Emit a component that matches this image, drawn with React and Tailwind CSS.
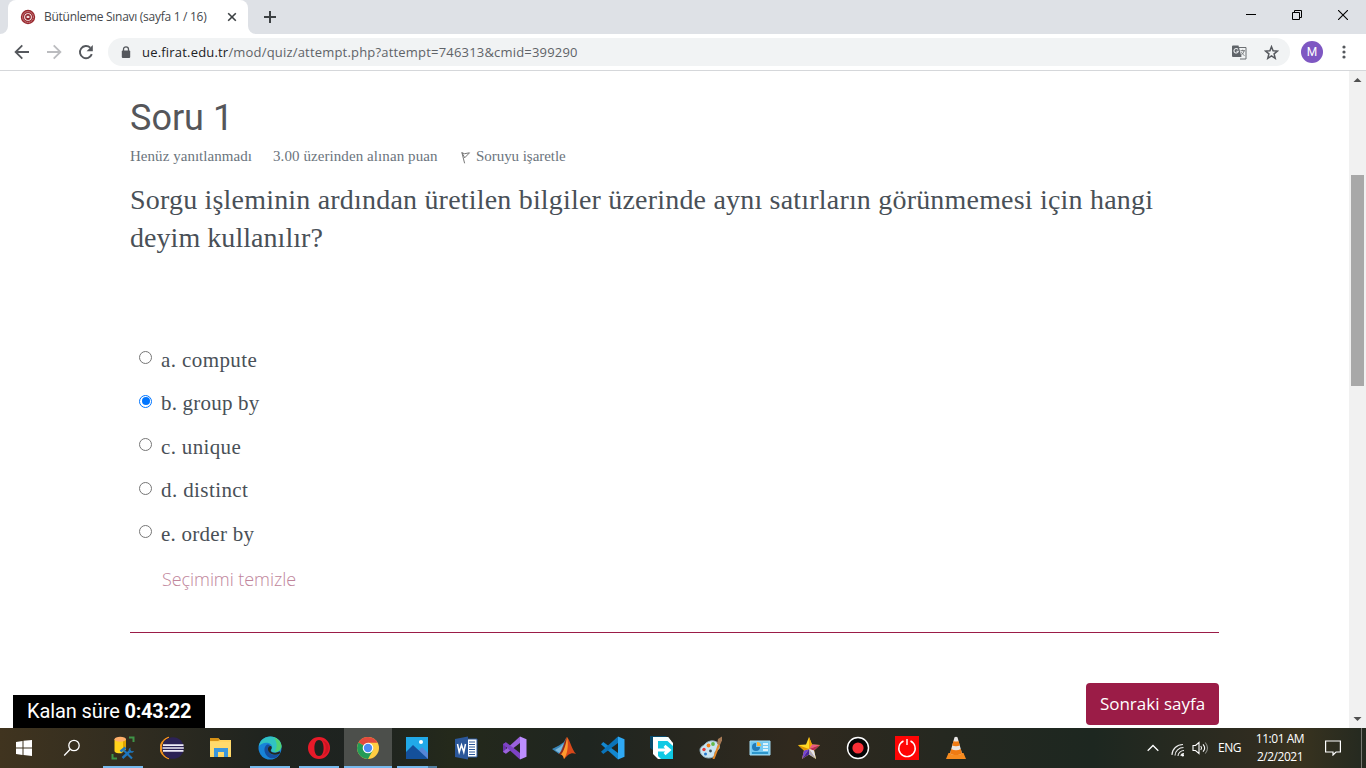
import React from "react";

const options = [
  { label: "a. compute", track: "tracking-[0.4px]" },
  { label: "b. group by", track: "tracking-[0.2px]", checked: true },
  { label: "c. unique", track: "tracking-[0.35px]" },
  { label: "d. distinct", track: "tracking-[0.4px]" },
  { label: "e. order by", track: "tracking-[0.25px]" },
];

function Favicon() {
  return (
    <svg width="16" height="16" viewBox="0 0 16 16" fill="none">
      <circle cx="8" cy="8" r="7.2" fill="#98262c" />
      <circle cx="8" cy="8" r="5.4" stroke="#d9a6a8" strokeWidth=".9" strokeDasharray="1.4 .7" />
      <circle cx="8" cy="8" r="3.8" fill="#fff" />
      <circle cx="8" cy="8" r="2.9" fill="#8e1f27" />
      <path d="M6.6 6.8h2.8v2.2H6.6z" fill="#f3dede" />
    </svg>
  );
}

function TabStrip() {
  return (
    <div className="flex h-[34px] bg-[#dee1e6]">
      <svg className="mt-[26px]" width="8" height="8" viewBox="0 0 8 8"><path d="M8 0v8H0a8 8 0 0 0 8-8Z" fill="#fff" /></svg>
      <div className="flex w-[240px] items-center rounded-t-lg bg-white pl-[12px]">
        <Favicon />
        <span className="ml-[8px] w-[176px] whitespace-nowrap font-['Open_Sans',sans-serif] text-[12px] tracking-[-0.28px] text-[#45484c]">Bütünleme Sınavı (sayfa 1 / 16)</span>
        <svg className="ml-[7px]" width="10" height="10" viewBox="0 0 10 10"><path d="m1.2 1.2 7.6 7.6m0-7.6L1.2 8.8" stroke="#3c4043" strokeWidth="1.6" /></svg>
      </div>
      <svg className="mt-[26px]" width="8" height="8" viewBox="0 0 8 8"><path d="M0 0v8h8a8 8 0 0 1-8-8Z" fill="#fff" /></svg>
      <svg className="ml-[8px] mt-[11px]" width="12" height="12" viewBox="0 0 12 12"><path d="M6 0v12M0 6h12" stroke="#3c4043" strokeWidth="2" /></svg>
      <div className="ml-auto flex h-[29px] items-center">
        <svg className="mr-[36px]" width="10" height="10" viewBox="0 0 10 10"><path d="M0 4.5h10" stroke="#000" /></svg>
        <svg className="mr-[36px]" width="10" height="10" viewBox="0 0 10 10" fill="none" stroke="#000"><path d="M.5 2.5h7v7h-7zM2.5 2.5v-2h7v7h-2" /></svg>
        <svg className="mr-[18px]" width="10" height="10" viewBox="0 0 10 10"><path d="m0 0 10 10M10 0 0 10" stroke="#000" strokeWidth="1.1" /></svg>
      </div>
    </div>
  );
}

function Toolbar() {
  return (
    <div className="flex h-[37px] items-center border-b border-[#d5d7da] bg-white pl-[14px]">
      <svg width="16" height="16" viewBox="0 0 16 16" fill="none" stroke="#55585d" strokeWidth="1.8"><path d="M15 8H2M8.3 1.3 1.6 8l6.7 6.7" /></svg>
      <svg className="ml-[16px]" width="16" height="16" viewBox="0 0 16 16" fill="none" stroke="#bbbcbf" strokeWidth="1.8"><path d="M1 8h13M7.7 1.3 14.4 8l-6.7 6.7" /></svg>
      <svg className="ml-[16px]" width="16" height="16" viewBox="0 0 16 16"><path d="M13.8 10.2A6.1 6.1 0 1 1 12.3 3.7" fill="none" stroke="#55585d" strokeWidth="1.9" /><path d="M14.8 1v6.2H8.6Z" fill="#55585d" /></svg>
      <div className="ml-[14px] flex h-[28px] w-[1182px] items-center rounded-full bg-[#f1f3f4] pl-[13px]">
        <svg width="10" height="13" viewBox="0 0 10 13"><path d="M2.5 5V3.3a2.5 2.5 0 0 1 5 0V5" fill="none" stroke="#55585d" strokeWidth="1.3" /><rect x=".8" y="4.5" width="8.4" height="7.5" rx="1" fill="#55585d" /></svg>
        <span className="ml-[11px] mt-px whitespace-nowrap font-['Open_Sans',sans-serif] text-[13px] tracking-[0.19px] text-[#5f6368]"><span className="text-[#202124]">ue.firat.edu.tr</span>/mod/quiz/attempt.php?attempt=746313&amp;cmid=399290</span>
        <svg className="ml-auto" width="15" height="15" viewBox="0 0 15 15">
          <path d="M6.500 2.500h7.500v11.500H8" fill="#f1f3f4" stroke="#6b6e72" />
          <path d="M1 .5h5.500L9.500 12H1a1 1 0 0 1-1-1V1.500a1 1 0 0 1 1-1Z" fill="#5f6368" />
          <path d="M6 4.500A2.200 2.200 0 1 0 6.300 6.300H4.400" fill="none" stroke="#e8eaed" strokeWidth="1.100" />
          <path d="M8.500 5.700h4.500M10.700 4.700v1M12 6c-.4 2-1.600 3.200-2.800 4.200M9.500 7.200c.5 1.300 1.700 2.600 3 3.300" fill="none" stroke="#6b6e72" strokeWidth=".9" />
        </svg>
        <svg className="ml-[17px] mr-[11px]" width="15" height="15" viewBox="0 0 15 15"><path d="m7.500 1.700 1.600 4.100 4.400.3-3.400 2.800 1.100 4.400-3.700-2.400-3.700 2.400 1.100-4.400-3.400-2.800 4.400-.3Z" fill="none" stroke="#55585d" strokeWidth="1.500" /></svg>
      </div>
      <div className="ml-[11px] flex h-[22px] w-[22px] items-center justify-center rounded-full bg-[#7e57c2] font-[Roboto,sans-serif] text-[12px] text-white">M</div>
      <svg className="ml-[19px]" width="4" height="14" viewBox="0 0 4 14" fill="#55585d"><circle cx="2" cy="2" r="1.600" /><circle cx="2" cy="7" r="1.600" /><circle cx="2" cy="12" r="1.600" /></svg>
    </div>
  );
}

function Question() {
  return (
    <main className="w-[1349px] pl-[130px] pt-[25px]">
      <h1 className="h-[44px] font-[Roboto,sans-serif] text-[36px] leading-[44px] text-[#55565a]">Soru 1</h1>
      <div className="mt-[6px] flex h-[20px] items-center whitespace-nowrap font-['Liberation_Serif',serif] text-[15px] text-[#6b747d]">
        <span className="w-[143px] tracking-[0.04px]">Henüz yanıtlanmadı</span>
        <span className="w-[188px] tracking-[0.08px]">3.00 üzerinden alınan puan</span>
        <svg className="mt-[3px]" width="10" height="13" viewBox="0 0 10 13" fill="none" stroke="#777" strokeWidth="1"><path d="M.8 1.200 3.600 12.300" /><path d="m1 1.800 2.500.9 5-.9-4.800 5Z" /></svg>
        <span className="ml-[5px] tracking-[-0.05px]">Soruyu işaretle</span>
      </div>
      <div className="mt-[15px] h-[76px] whitespace-nowrap font-['Liberation_Serif',serif] text-[28px] leading-[38px] text-[#495057]">
        <p className="tracking-[0.194px]">Sorgu işleminin ardından üretilen bilgiler üzerinde aynı satırların görünmemesi için hangi</p>
        <p className="tracking-[0.05px]">deyim kullanılır?</p>
      </div>
      <div className="mt-[81px] pl-[9px]">
        {options.map((o) => (
          <label key={o.label} className="flex h-[43.5px] items-center">
            <span className={"mb-[4px] flex h-[13px] w-[13px] items-center justify-center rounded-full border bg-white " + (o.checked ? "border-[#0075ff]" : "border-[#767676]")}>
              {o.checked && <span className="h-[8px] w-[8px] rounded-full bg-[#0075ff]" />}
            </span>
            <span className={"ml-[9px] mt-px whitespace-nowrap font-['Liberation_Serif',serif] text-[21px] text-[#495057] " + o.track}>{o.label}</span>
          </label>
        ))}
        <div className="ml-[23px] mt-[7px] h-[33px] whitespace-nowrap font-['Open_Sans',sans-serif] text-[18px] font-light leading-[32px] tracking-[-0.07px] text-[#c0859b]">Seçimimi temizle</div>
      </div>
      <hr className="mt-[36px] w-[1089px] border-t border-[#9b1c47]" />
      <div className="mt-[50px] flex w-[1089px] justify-end">
        <button className="h-[42px] w-[133px] whitespace-nowrap rounded bg-[#9b1c47] font-['Open_Sans',sans-serif] text-[17px] text-white">Sonraki sayfa</button>
      </div>
    </main>
  );
}

const glyphs = [
  <g key="ssms"><path d="M18 1.500h4.500V6M1.500 18v4.500H6" fill="none" stroke="#3f9447" strokeWidth="2" /><path d="M3.500 3.500v11.500c0 1.200 1.500 2 4 2.200h3l4.500-4V3.500Z" fill="#ffd21c" /><path d="M12 4.500 15 3.500v9l-3 2Z" fill="#e0a400" /><ellipse cx="9.250" cy="3.300" rx="5.750" ry="2.500" fill="#ffaf69" /><path d="m11.500 22 7-6.500" stroke="#1f77bd" strokeWidth="2.400" /><path d="m21 22.500-8-8" stroke="#1f77bd" strokeWidth="2.200" /><path d="m9.500 15.500 5-4" stroke="#1f77bd" strokeWidth="2.600" /><path d="M19.500 11.500c-2 1-2.500 3-1 4.500s3.700 1 4.500-1l-2.300.3-1.300-1.300Z" fill="#1f77bd" /></g>,
  <g key="eclipse"><path d="M9 1.200a11 11 0 0 0 0 21.600A11.500 11.500 0 0 1 9 1.200" fill="#f7941e" stroke="#f7941e" /><circle cx="13" cy="12" r="10.800" fill="#2c2255" /><path d="M3 9.200h20.500M2.500 12h21.300M3 14.800h20.500" stroke="#efedf8" strokeWidth="1.700" /></g>,
  <g key="explorer"><path d="M1 2h8l2 2h11v17H1Z" fill="#ffd45f" /><path d="M1 2h8l2 2-2 1H1Z" fill="#d69115" /><path d="M1 6h21v13H1Z" fill="#ffda6c" /><path d="M5 12h14v9h-4v-5h-6v5H5Z" fill="#3b96dc" /></g>,
  <g key="edge"><circle cx="12" cy="12" r="11.500" fill="#1884d8" /><path d="M1 10C2 4 7 .5 12.500.5 19 .5 23.500 5 23.500 10c0 4-3 6.500-7 6.500-3 0-4-1.500-3-3 1.500-2 .5-5.500-3-6.500C7 6 3 7.500 1 10Z" fill="#31c3c2" /><path d="M16 1.400c5 1.600 7.500 5.600 7.500 9.200-.8 4-4 5.400-7 5.200 3-4 3-9-.5-14.400Z" fill="#5ad65f" opacity=".8" /><path d="M9 8.500C5 11 5.500 19 12 22c5 1 8-1 9.500-4-5 2.500-11 .2-11.500-4.500C9.800 11.500 11 10 12.300 9.600 11.500 8.700 10 8.200 9 8.500Z" fill="#164f9f" /><path d="M10 12c.6-2 2-2.500 3.200-1.700.8 1.100.7 2.400-.2 3.300-.8 1.500 0 3 3 3.100 2 .1 4-.5 5.300-1.500 1 .5 1 1.500.2 2.600-4.500 2.300-10.700.2-11.500-3.800Z" fill="#242720" /></g>,
  <g key="opera"><path fillRule="evenodd" d="M12 1a11 11 0 1 0 0 22 11 11 0 0 0 0-22Zm0 3c3 0 4.600 3.500 4.600 8S15 20 12 20s-4.600-3.500-4.600-8S9 4 12 4Z" fill="#e81a29" /><path d="M15 4.500c5 2 5 13 0 15 9-1 9-14 0-15Z" fill="#b30d1c" opacity=".5" /></g>,
  <g key="chrome"><circle cx="12" cy="12" r="11" fill="#ffcd42" /><path d="M12 12 2.500 6.500A11 11 0 0 1 21.600 6.700H12Z" fill="#e24a3e" /><path d="M12 12 2.500 6.500A11 11 0 0 0 12 23l4.700-8.500Z" fill="#249b58" /><circle cx="12" cy="12" r="5.300" fill="#fff" /><circle cx="12" cy="12" r="4.200" fill="#4c8bf5" /></g>,
  <g key="photos"><path d="M1 1h22v22H1Z" fill="#21a9e8" /><path d="m13 15 4-4 6 6v6H13Z" fill="#5586d7" /><path d="m1 16 7-7 15 14H1Z" fill="#14509b" /><circle cx="16" cy="6" r="2" fill="#fff" /></g>,
  <g key="word"><path d="M13 3h10v18H13Z" fill="#fff" stroke="#2b579a" /><path d="M15 6h6M15 8.500h6M15 11h6M15 13.500h6M15 16h6M15 18.500h6" stroke="#2b579a" /><path d="m1 3 13-2.500v23L1 21Z" fill="#2b579a" /><path d="m3.500 8 1.700 8L7.500 9l2.300 7 1.700-8" fill="none" stroke="#fff" strokeWidth="1.500" /></g>,
  <g key="vs"><path d="M0 8 3 6.200v11.600L0 16Z" fill="#6a32ac" /><path d="M17 .5 0 15.800l3 2L17 7Z" fill="#9a62dc" /><path d="m0 8.200 3-2L17 17v6.500Z" fill="#7d43c4" /><path d="m17 .5 6.500 2.700v17.600L17 23.500Z" fill="#bd8eff" /></g>,
  <g key="matlab"><path d="m0 13 7-3.500 5-3.500 2-4-1 12-6 4Z" fill="#3a86b8" /><path d="m3 14 5-3 4-4-4 10-2-1Z" fill="#7db9dc" /><path d="M15 1c3 3 5 13 9 17-3-1.500-5-1-8 1l-4 4c-.5-3-2-5-5-5 4-3 5-13 8-17Z" fill="#d9481a" /><path d="M15 1c-2 7-3 13-6.500 17.200 2 .3 3 1.800 3.500 4.800 3-4 5-13 3-22Z" fill="#ff9a2e" /><path d="M15 1c-3 5-4 14-8 17l2 .3C12 15 14 8 15 1Z" fill="#8e2a1e" /></g>,
  <g key="vscode"><path d="m0 8.200 2.300-2.100L17 17v6.500Z" fill="#1387cf" /><path d="M17 .5 0 15.800l2.300 2.100L17 7Z" fill="#0b74ba" /><path d="m17 .5 6.500 2.700v17.600L17 23.500Z" fill="#2fa9f4" /></g>,
  <g key="transfer"><path d="M0 0h16l3 3v12H4l-4-3Z" fill="#074a6b" /><path d="M3 1h15l5 6v16H8l-5-5Z" fill="#fff" /><path d="M8 5h9.500l5.500 5v13H11l-3-3Z" fill="#0fc9e4" /><path d="M3 1h15l3 4H8l-5-4Z" fill="#f4ffff" /><path d="M7 14h10M14.500 9.800l4.800 4.200-4.800 4.200" fill="none" stroke="#fff" strokeWidth="3" /></g>,
  <g key="paint"><path d="M5 9C10 3 18 4 20 9c2 5-3 5-4 7s1 4-2 5C8 24 1 20 1 14c0-2 1-3 4-5Z" fill="#c9e4f2" stroke="#8faebc" /><circle cx="5" cy="13.500" r="1.700" fill="#e43935" /><circle cx="9.500" cy="9.500" r="1.900" fill="#f5821a" /><circle cx="14" cy="8" r="1.900" fill="#61b949" /><circle cx="6.500" cy="18" r="1.500" fill="#2779ce" /><circle cx="11.500" cy="15" r="1.400" fill="#3b4b55" /><path d="m13.500 23 5.500-15 2 1-5.500 14Z" fill="#e58929" /><path d="m18 8 1-5 4-2.500v4L21 9Z" fill="#a77a56" /></g>,
  <g key="panel"><path d="M2 5h20v14H2Z" fill="#73c8f2" stroke="#a4dcf4" /><path d="M8 7a4 4 0 1 0 4 4H8Z" fill="#237bb8" /><path d="M9 6a4 4 0 0 1 4 4H9Z" fill="#ffb536" /><path d="M15 8h5M15 11h5M15 14h5" stroke="#fff" strokeWidth="1.700" /><path d="M4 17h16" stroke="#1686bf" strokeWidth="1.500" /></g>,
  <g key="star"><path d="m12 1 3 7.500 8 .5-6 5.500 2 8.500-7-4.500L5 23l2-8.500L1 9l8-.5Z" fill="#ffd926" /><path d="m12 1 3 7.500L12 13Z" fill="#f0a000" /><path d="m15 8.500 8 .5-11 4Z" fill="#ec5a86" /><path d="m12 13 11-4-6 5.500Z" fill="#b82a58" /><path d="m12 13 5 1.500L19 23Z" fill="#e4e2ef" /><path d="m12 13 7 10-7-4.500Z" fill="#a9a4bd" /><path d="m12 13-7 10 7-4.500Z" fill="#4822a1" /><path d="m12 13-7 10 2-8.500Z" fill="#7240d8" /><path d="m1 9 11 4-5 1.500Z" fill="#e19700" /></g>,
  <g key="record"><circle cx="12" cy="12" r="10.500" fill="#050505" stroke="#fff" strokeWidth="1.400" /><circle cx="12" cy="12" r="5.600" fill="#f92f36" /></g>,
  <g key="power"><path d="M0 0h24v24H0Z" fill="#ff0505" /><path d="M8.500 5a8.200 8.200 0 1 0 7 0M12 3v6" fill="none" stroke="#fff" strokeWidth="1.400" /></g>,
  <g key="vlc"><path d="M4.500 17h15l2.500 6H2Z" fill="#f68b1f" /><path d="m10.500 1.300 1.500-.6 1.500.6 4.500 16.200c-3 2-9 2-12 0Z" fill="#e8e6e4" /><path d="m9.500 5-1.300 4.500c2 1 5.600 1 7.600 0L14.500 5c-1.500.8-3.500.8-5 0ZM7.200 13 6 17.500c3 2 9 2 12 0L16.800 13c-3 1.600-6.600 1.600-9.600 0Z" fill="#ef7b13" /></g>,
];

function Taskbar() {
  return (
    <footer className="flex h-[40px] bg-[linear-gradient(90deg,#40341f_0%,#302c20_10%,#20241f_19%,#1e2320_27%,#24291b_33%,#1f2520_43%,#30291e_58%,#252820_69%,#1d2720_80%,#302c20_92%,#39331f_95%,#242920_100%)] text-white">
      <div className="flex w-[48px] items-center justify-center">
        <svg width="16" height="16" viewBox="0 0 16 16" fill="#fff"><path d="m0 2 6.500-1v6.500H0Zm7.500-1.200L16 0v7.500H7.500ZM0 8.500h6.500V15L0 14Zm7.500 0H16V16l-8.500-1Z" /></svg>
      </div>
      <div className="mr-[3px] flex w-[48px] items-center justify-center">
        <svg width="18" height="18" viewBox="0 0 18 18" fill="none" stroke="#fff" strokeWidth="1.300"><circle cx="11" cy="6.500" r="5.200" /><path d="M7.200 10.300 1.200 16.500" /></svg>
      </div>
      <div className="flex gap-px">
        {glyphs.map((g, i) => (
          <div key={i} className={"flex h-[40px] w-[48px] flex-col items-center justify-between pt-[8px] " + (i === 5 ? "bg-[#4c4f4b]" : "")}>
            <svg width="24" height="24" viewBox="0 0 24 24">{g}</svg>
            {[0, 3, 4].includes(i) && <div className="h-[2px] w-[40px] bg-[#76b9ed]" />}
            {i === 5 && <div className="h-[2px] w-[48px] bg-[#76b9ed]" />}
            {i === 6 && <div className="flex h-[2px] w-[40px]"><div className="w-[31px] bg-[#76b9ed]" /><div className="w-[9px] bg-[#527fa1]" /></div>}
          </div>
        ))}
      </div>
      <div className="ml-auto flex items-center font-['Open_Sans',sans-serif]">
        <svg width="12" height="8" viewBox="0 0 12 8"><path d="m.7 6.800 5.300-5.300 5.300 5.300" fill="none" stroke="#fff" strokeWidth="1.300" /></svg>
        <svg className="ml-[12px] mt-[3px]" width="15" height="14" viewBox="0 0 15 14" fill="none" stroke="#eee" strokeWidth="1.100"><path d="M1 12C1 6 6 1.500 12 1.500M4 12.500C4 8 8 4.500 12.500 4.500M7 13c0-3 3-5.500 6-5.500M10 13c0-1.500 1.500-2.500 3-2.500" /><circle cx="11.800" cy="12.300" r="1.200" fill="#fff" stroke="none" /></svg>
        <svg className="ml-[6px]" width="17" height="16" viewBox="0 0 17 16" fill="none" stroke="#fff" strokeWidth="1.100"><path d="M1 5.500h2.500L7 2.500v11l-3.500-3H1ZM8.800 6c1 1.300 1 2.700 0 4M11 4.300c2 2.200 2 5.200 0 7.400" /><path d="M13.200 2.500c3 3.500 3 7.500 0 11" stroke="#8b8d87" /></svg>
        <span className="ml-[9px] w-[24px] whitespace-nowrap text-[12px] tracking-[-0.5px]">ENG</span>
        <div className="ml-[12px] w-[52px] whitespace-nowrap text-center text-[12px] leading-[18px] tracking-[-0.48px]"><div>11:01 AM</div><div>2/2/2021</div></div>
        <svg className="ml-[19px] mr-[20px]" width="16" height="16" viewBox="0 0 16 16"><path d="M.6 1h14.800v11H11l-3 3v-3H.6Z" fill="none" stroke="#fff" strokeWidth="1.200" /></svg>
        <div className="mr-[4px] h-[40px] w-px bg-[#777872]" />
      </div>
    </footer>
  );
}

export default function App() {
  return (
    <div className="relative flex h-[768px] w-[1366px] flex-col overflow-hidden bg-white">
      <TabStrip />
      <Toolbar />
      <div className="flex h-[657px]">
        <Question />
        <aside className="flex w-[17px] flex-col items-center bg-[#f1f1f1]">
          <svg width="17" height="17" viewBox="0 0 17 17"><path d="M4.500 11h8l-4-4Z" fill="#505050" /></svg>
          <div className="mt-[87px] h-[211px] w-[13px] bg-[#a8a8a8]" />
          <svg className="mt-auto" width="17" height="17" viewBox="0 0 17 17"><path d="M4.500 6h8l-4 4Z" fill="#505050" /></svg>
        </aside>
      </div>
      <Taskbar />
      <div className="absolute left-[13px] top-[695px] flex h-[33px] w-[192px] items-center whitespace-pre bg-black pb-[2px] pl-[14px] font-[Roboto,sans-serif] text-[20px] tracking-[-0.1px] text-white">Kalan süre <b className="tracking-[-0.3px]">0:43:22</b></div>
    </div>
  );
}
